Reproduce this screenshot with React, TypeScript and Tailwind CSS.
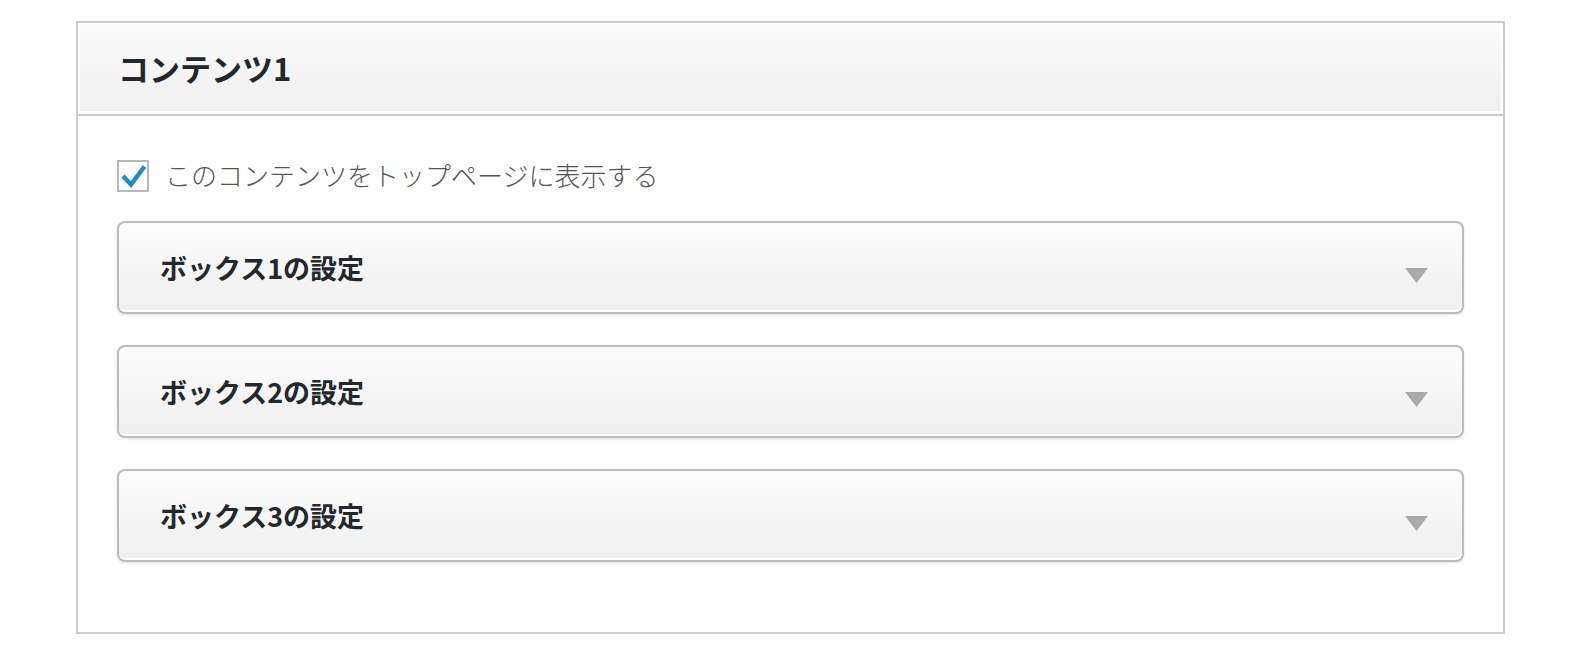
import React from "react";

const font = { fontFamily: '"Noto Sans CJK JP", "Noto Sans", sans-serif' };

function Box({ title }: { title: string }) {
  return (
    <div className="flex h-[93px] items-center justify-between rounded-[8px] border-2 border-[#bcbcbc] bg-gradient-to-b from-[#fdfdfd] to-[#eeeeee] pl-[41px] pr-[34px] shadow-[inset_0_-2px_0_#ffffff,0_1px_3px_rgba(0,0,0,0.12)]">
      <span className="text-[27px] font-bold leading-none text-[#23282d]">{title}</span>
      <svg width="23" height="16" viewBox="0 0 23 16" className="mt-[16px]">
        <polygon points="0,0 23,0 11.5,15" fill="#aaaaaa" />
      </svg>
    </div>
  );
}

export default function App() {
  return (
    <div className="min-h-[662px] bg-white pt-[21px] pl-[76px] pr-[75px]" style={font}>
      <div className="border-2 border-[#cccccc] bg-white">
        <div className="border-b-2 border-[#cccccc] pt-px px-[2px] pb-[3px]">
          <div className="flex h-[87px] items-center bg-gradient-to-b from-[#fbfbfb] to-[#efefef] pl-[38px]">
            <h2 className="text-[31px] font-bold leading-none text-[#23282d]">コンテンツ1</h2>
          </div>
        </div>
        <div className="px-[39px] pt-[44px] pb-[70px]">
          <label className="flex items-center gap-[16px]">
            <span className="flex h-[32px] w-[32px] items-center justify-center border-2 border-[#b4b9be] bg-white">
              <svg width="28" height="28" viewBox="0 0 28 28">
                <polyline points="4,14 12,22.5 25.5,4.5" fill="none" stroke="#1e8cbe" strokeWidth="4.5" strokeLinejoin="miter" strokeLinecap="butt" />
              </svg>
            </span>
            <span className="-mt-[3px] text-[26px] font-light leading-none text-[#555555]">このコンテンツをトップページに表示する</span>
          </label>
          <div className="mt-[29px] flex flex-col gap-[31px]">
            <Box title="ボックス1の設定" />
            <Box title="ボックス2の設定" />
            <Box title="ボックス3の設定" />
          </div>
        </div>
      </div>
    </div>
  );
}
